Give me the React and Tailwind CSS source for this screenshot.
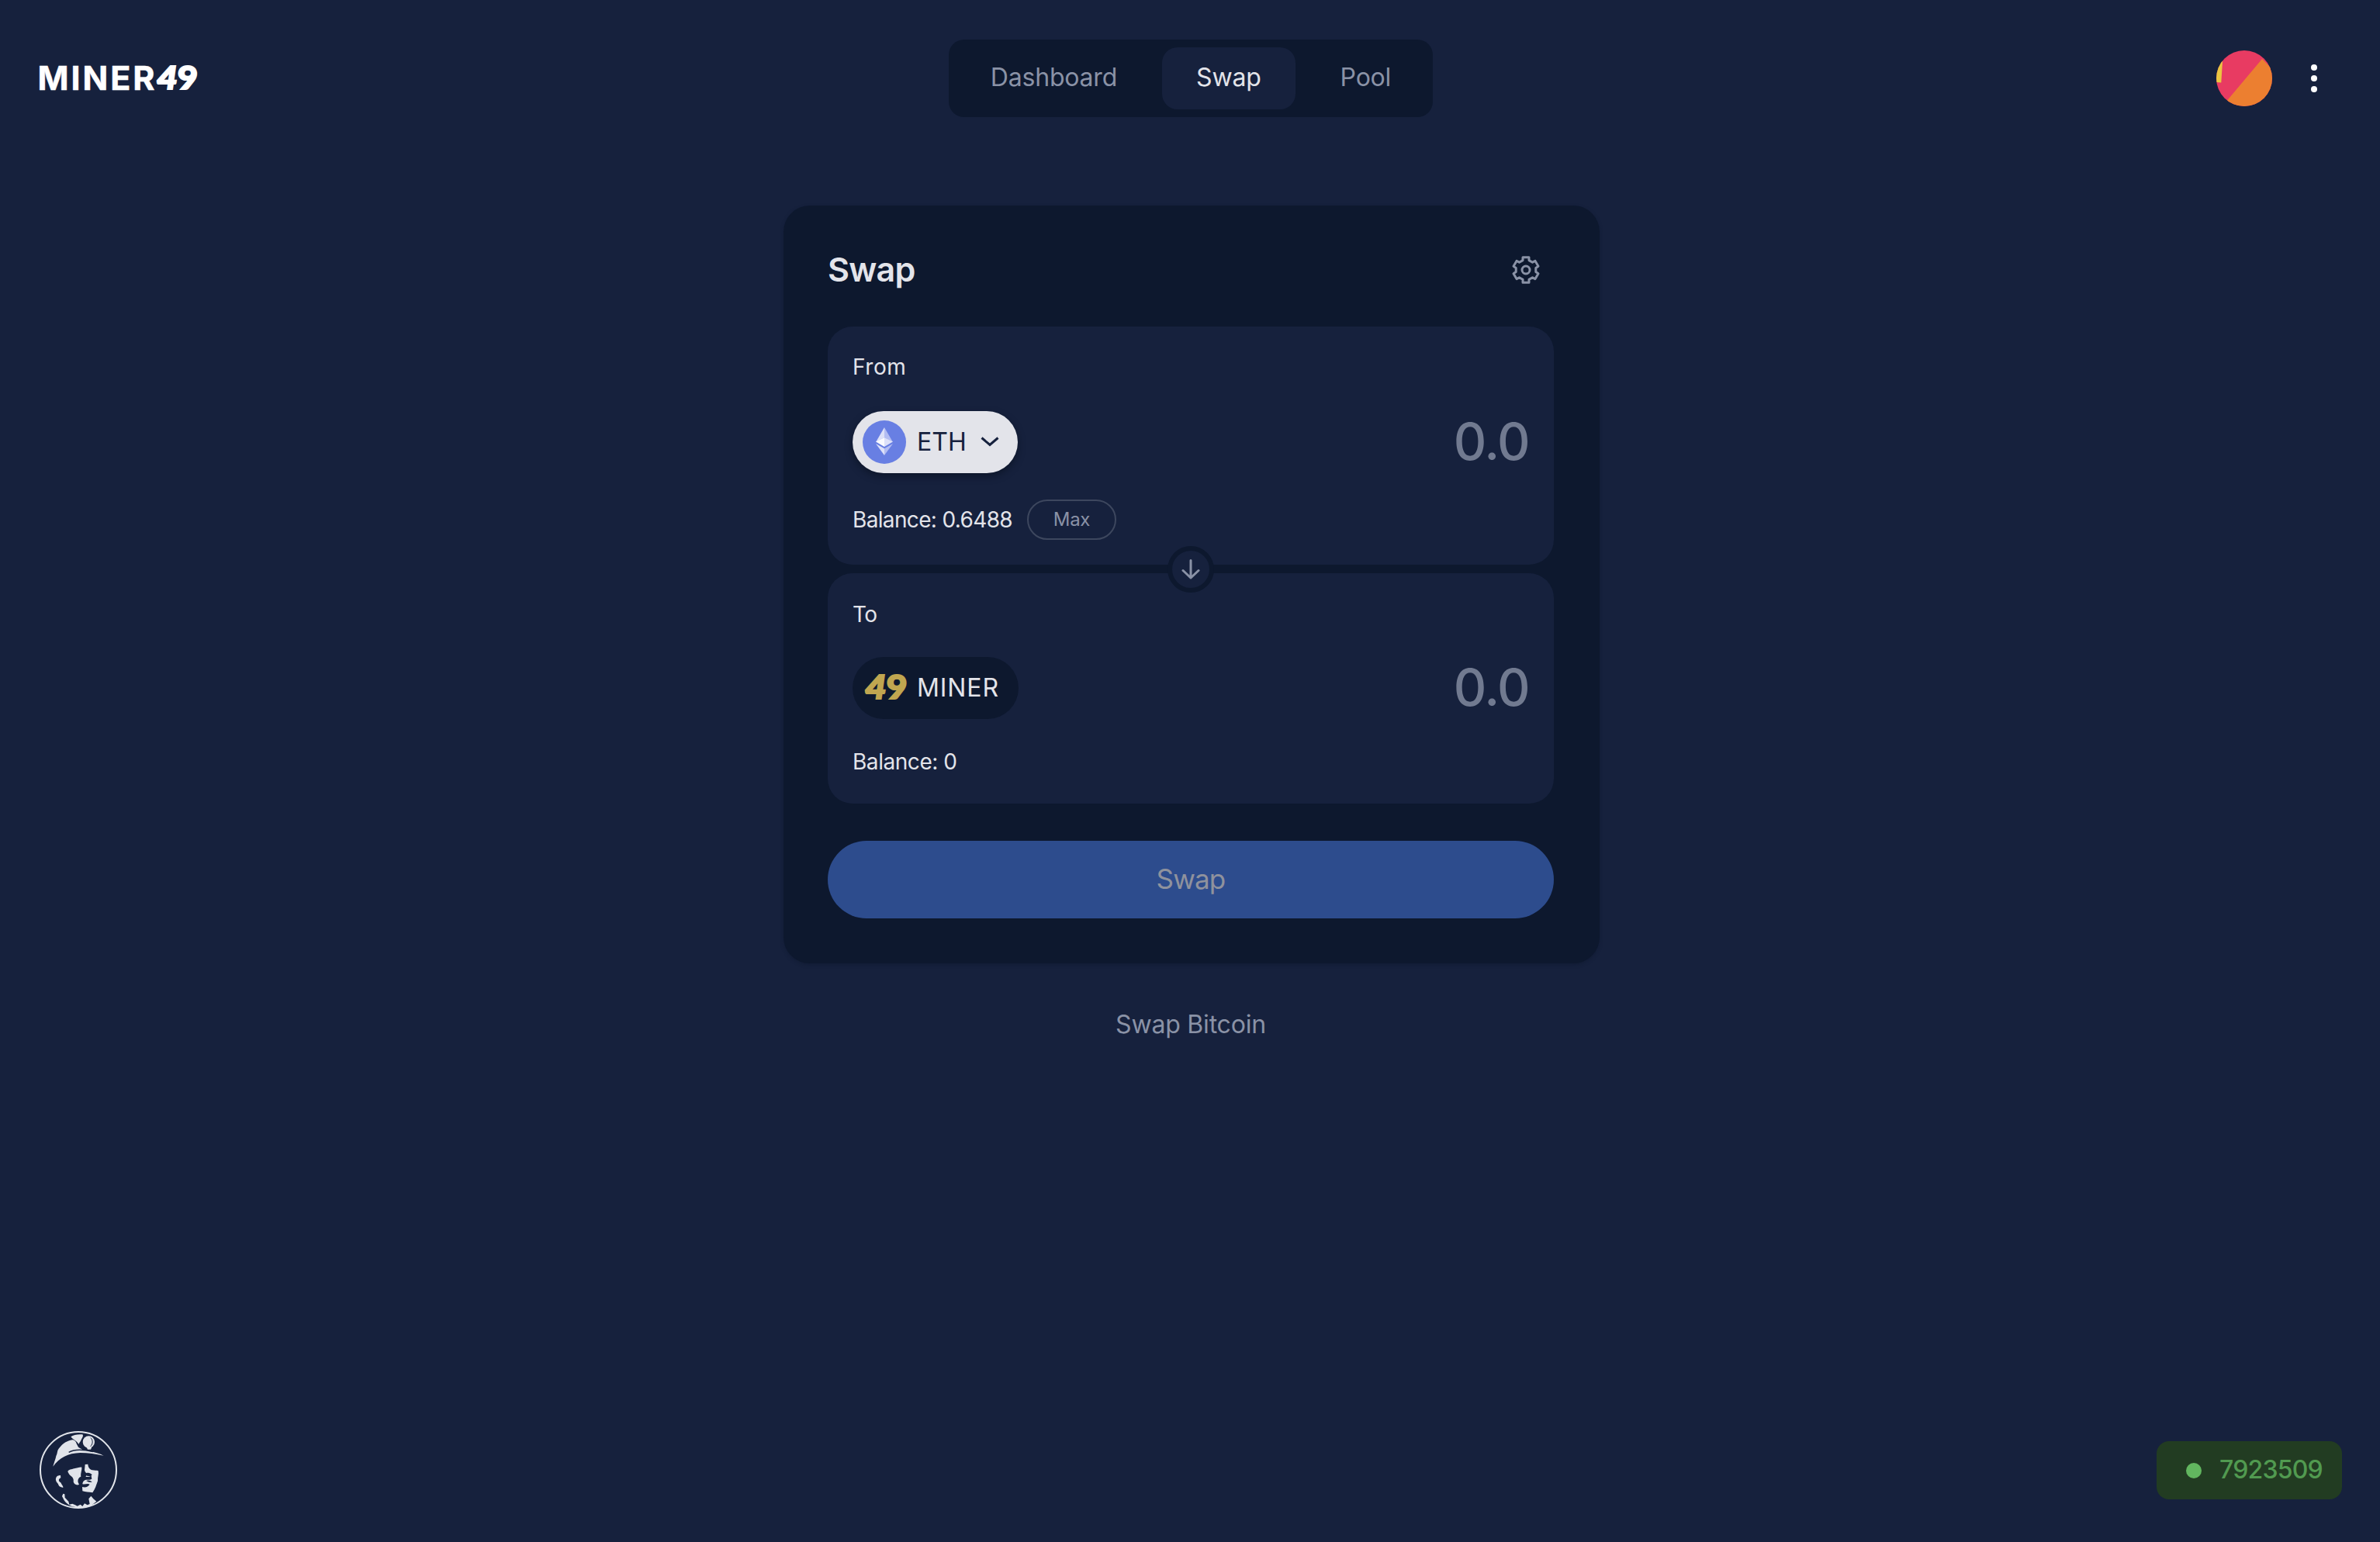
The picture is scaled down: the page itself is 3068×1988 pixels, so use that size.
function FortyNine({ color }) {
  return (
    <g fill={color} stroke={color} strokeWidth="2" fontFamily="Lato, sans-serif" fontWeight="900" fontSize="41">
      <text x="-1" y="30" fontStyle="italic" textLength="27" lengthAdjust="spacingAndGlyphs">4</text>
      <text x="26" y="30" textLength="26" lengthAdjust="spacingAndGlyphs">9</text>
    </g>
  );
}

function Logo() {
  return (
    <svg width="212" height="52" viewBox="-4 -9 212 52" className="-ml-1 block" role="img" aria-label="Miner49">
      <text x="-2.5" y="31.7" fill="white" stroke="white" strokeWidth="0.5" fontFamily="Inter, sans-serif" fontWeight="700" fontSize="43" textLength="151" lengthAdjust="spacing">MINER</text>
      <g transform="translate(152 0.5)"><FortyNine color="white" /></g>
    </svg>
  );
}

function TokenMark() {
  return (
    <svg width="64" height="56" viewBox="-5 -12 64 56" className="-mx-1 block" aria-hidden="true">
      <g transform="translate(3 -0.5) scale(1.03)"><FortyNine color="#c0a650" /></g>
    </svg>
  );
}

function Avatar() {
  return (
    <svg width="72" height="72" viewBox="0 0 72 72" className="block">
      <defs>
        <clipPath id="avatarClip"><circle cx="36" cy="36" r="36" /></clipPath>
      </defs>
      <g clipPath="url(#avatarClip)">
        <rect width="72" height="72" fill="#e83b62" />
        <path d="M59 11 L80 32 L80 80 L25 80 L14 64.5 Z" fill="#ec7f30" />
        <path d="M0 10 L8 13.5 L6.3 41.5 L0 41 Z" fill="#eac640" />
      </g>
    </svg>
  );
}

function EthIcon() {
  return (
    <svg width="56" height="56" viewBox="0 0 56 56" className="block">
      <circle cx="28" cy="28" r="28" fill="#687fe3" />
      <path d="M28 9 L17 28 L28 22 Z" fill="#dde1f9" />
      <path d="M28 9 L39 28 L28 22 Z" fill="#b3bdf2" />
      <path d="M17 27.5 L28 22 L28 34 Z" fill="#fafbff" />
      <path d="M39 27.5 L28 22 L28 34 Z" fill="#dde1f9" />
      <path d="M17 30 L28 36.3 L28 45 Z" fill="#dde1f9" />
      <path d="M39 30 L28 36.3 L28 45 Z" fill="#b3bdf2" />
    </svg>
  );
}

function Gear() {
  return (
    <svg width="48" height="48" viewBox="-24 -24 48 48" className="block" fill="none" stroke="#8a92a6" strokeWidth="3" strokeLinejoin="round">
      <path d="M-4 -16.3 H4 V-12.4 L8.5 -9.8 L12 -11.6 L16 -4.8 L12.8 -2.6 V2.6 L16 4.8 L12 11.6 L8.5 9.8 L4 12.4 V16.3 H-4 V12.4 L-8.5 9.8 L-12 11.6 L-16 4.8 L-12.8 2.6 V-2.6 L-16 -4.8 L-12 -11.6 L-8.5 -9.8 L-4 -12.4 Z" />
      <circle r="5" />
    </svg>
  );
}

function Miner() {
  return (
    <svg width="100" height="100" viewBox="0 0 300 300" className="block" fill="#e1e4ea">
      <circle cx="150" cy="150" r="147" fill="none" stroke="#e1e4ea" strokeWidth="6" />
      <path d="M52 137 C58 116 63 104 64 96 C70 86 67 76 75 67 C91 47 107 37 127 34 C134 33 141 40 143 49 L150 62 L166 72 L190 77 C215 82 237 88 248 95 C218 89 187 84 157 84 C111 85 76 103 52 137 Z" />
      <path d="M121 22 C131 14 147 12 166 13 C171 19 165 25 161 34 C158 42 154 45 151 51 C145 38 133 37 121 22 Z" />
      <path d="M113 82 C135 70 166 70 207 80" fill="none" stroke="#16213d" strokeWidth="4" />
      <circle cx="190" cy="42" r="27" fill="#16213d" />
      <circle cx="190" cy="42" r="23" />
      <path d="M197 26 C207 33 207 50 197 59" fill="none" stroke="#16213d" strokeWidth="3" />
      <path d="M182 62 h20 l-4 9 h-12 Z" />
      <path d="M148 50 l8 14 M156 48 l8 14" fill="none" stroke="#16213d" strokeWidth="3" />
      <path d="M109 157 C112 148 124 148 134 145 C145 143 154 139 163 140 C164 154 158 162 160 176 C151 179 147 188 149 198 L153 207 C142 211 133 205 131 196 C133 184 127 177 119 172 C113 168 112 161 109 157 Z" />
      <path d="M176 129 L187 128 C188 141 195 149 204 151 C213 153 221 151 227 154 C230 167 224 179 225 193 C219 209 215 225 205 238 C191 236 178 236 166 232 L165 216 C178 220 188 215 194 206 C184 201 176 208 166 205 C167 193 174 190 180 188 C189 189 195 189 202 185 L200 173 C192 177 184 178 178 176 L188 166 C181 162 175 160 174 151 Z" />
      <path d="M183 162 C191 160 198 164 203 169 L198 175 L183 173 Z M180 192 C190 188 199 192 203 198 L190 197 Z" fill="#16213d" />
      <path d="M81 171 C69 170 61 179 63 190 C64 199 73 203 74 210 C77 217 85 217 91 219 C92 210 84 207 83 200 C71 194 73 184 82 181 Z" />
      <path d="M91 242 L97 244 L98 257 L112 272 L115 284 L127 281 L138 286 L146 290 L158 284 L166 291 L174 280 L185 286 L194 282 L190 262 L199 251 L208 262 L220 272 L199 289 C177 297 150 298 127 292 C112 286 98 276 92 262 L87 252 Z" />
    </svg>
  );
}

function NavTab({ label, active }) {
  return (
    <a className={active
      ? "flex h-20 items-center rounded-[20px] bg-[#16213d] px-[44px] pb-[2px] text-[#e3e4ea]"
      : "flex h-20 items-center rounded-[20px] px-[44px] pb-[2px] text-[#8a92a6]"}>
      {label}
    </a>
  );
}

function Amount() {
  return <span className="-mt-[2px] text-[66px] leading-20 font-[450] tracking-[-1.5px] text-[#717a90]">0.0</span>;
}

export default function App() {
  return (
    <div className="flex h-[1988px] w-[3068px] flex-col overflow-hidden bg-[#16213d] font-['Inter',sans-serif] text-[32px] leading-10 text-[#e3e4ea]">
      <header className="grid h-[202px] grid-cols-[1fr_auto_1fr] items-center pr-[49px] pl-[51px]">
        <Logo />
        <nav className="flex gap-[14px] rounded-[20px] bg-[#0d182e] p-[10px] tracking-[-0.2px]">
          <NavTab label="Dashboard" />
          <NavTab label="Swap" active />
          <NavTab label="Pool" />
        </nav>
        <div className="flex items-center justify-end gap-[50px] pr-[32px]">
          <Avatar />
          <div className="flex flex-col gap-[6px]">
            <span className="size-2 rounded-full bg-white" />
            <span className="size-2 rounded-full bg-white" />
            <span className="size-2 rounded-full bg-white" />
          </div>
        </div>
      </header>

      <main className="ml-[1010px] flex w-[1052px] flex-1 flex-col items-center pt-[63px]">
        <section className="h-[977px] w-full rounded-[34px] bg-[#0d182e] pt-[57px] pr-[59px] pl-[57px] shadow-[0_2px_4px_rgba(13,24,46,0.5)]">
          <div className="flex h-[52px] items-center justify-between pr-[12px]">
            <h1 className="-mt-[2px] text-[43px] leading-[52px] font-[560] tracking-[-0.7px]">Swap</h1>
            <Gear />
          </div>

          <div className="relative mt-[47px] flex flex-col gap-[11px]">
            <div className="h-[307px] rounded-[32px] bg-[#16213d] px-8 pt-8">
              <div className="text-[28px] tracking-[0.6px]">From</div>
              <div className="mt-[37px] flex h-20 items-center justify-between">
                <button className="flex h-20 w-[213px] items-center rounded-full bg-[#e3e4ea] pl-[13px] text-[#16213d] shadow-[0_4px_10px_rgba(8,14,28,0.55)]">
                  <EthIcon />
                  <span className="ml-[14px]">ETH</span>
                  <svg width="24" height="16" viewBox="0 0 24 16" className="ml-[18px] block" fill="none" stroke="#16213d" strokeWidth="3">
                    <path d="M1.5 2.5 L12 11.5 L22.5 2.5" />
                  </svg>
                </button>
                <Amount />
              </div>
              <div className="mt-[34px] flex h-[52px] items-center text-[28px]">
                <span className="w-[207px] tracking-[-0.65px] whitespace-nowrap">Balance: 0.6488</span>
                <button className="ml-[18px] flex h-[52px] w-[115px] items-center justify-center rounded-full border-2 border-[#3d475e] text-2xl tracking-[-0.3px] text-[#8a92a6]">Max</button>
              </div>
            </div>

            <div className="h-[297px] rounded-[32px] bg-[#16213d] px-8 pt-[33px]">
              <div className="text-[28px] tracking-[-0.6px]">To</div>
              <div className="mt-[35px] flex h-20 items-center justify-between">
                <div className="flex h-20 w-[214px] items-center rounded-full bg-[#0d182e] pl-[13px]">
                  <TokenMark />
                  <span className="ml-[14px] tracking-[0.9px]">MINER</span>
                </div>
                <Amount />
              </div>
              <div className="mt-[35px] text-[28px] tracking-[-0.45px]">Balance: 0</div>
            </div>

            <button className="absolute top-[283px] left-[438px] flex size-[60px] items-center justify-center rounded-full border-6 border-[#0d182e] bg-[#16213d]">
              <svg width="26" height="28" viewBox="0 0 26 28" className="block" fill="none" stroke="#8a92a6" strokeWidth="3" strokeLinecap="round" strokeLinejoin="round">
                <path d="M13 2.5 V25 M3 15.5 L13 25 L23 15.5" />
              </svg>
            </button>
          </div>

          <button className="mt-12 flex h-[100px] w-full items-center justify-center rounded-full bg-[#2d4c8d] pb-[2px] text-[35px] tracking-[-0.8px] text-[#8f929d]">Swap</button>
        </section>
        <a className="mt-[59px] mr-[2px] tracking-[-0.2px] text-[#8a92a6]">Swap Bitcoin</a>
      </main>

      <footer className="flex h-[143px] items-start justify-between pr-[49px] pl-[51px]">
        <Miner />
        <div className="mt-[13px] flex h-[75px] w-[239px] items-center rounded-2xl bg-[#223c22] pl-[38px] font-medium text-[#519a50]">
          <span className="size-5 rounded-full bg-[#62b65f]" />
          <span className="-mt-[2px] ml-[23px] tracking-[-0.8px]">7923509</span>
        </div>
      </footer>
    </div>
  );
}
